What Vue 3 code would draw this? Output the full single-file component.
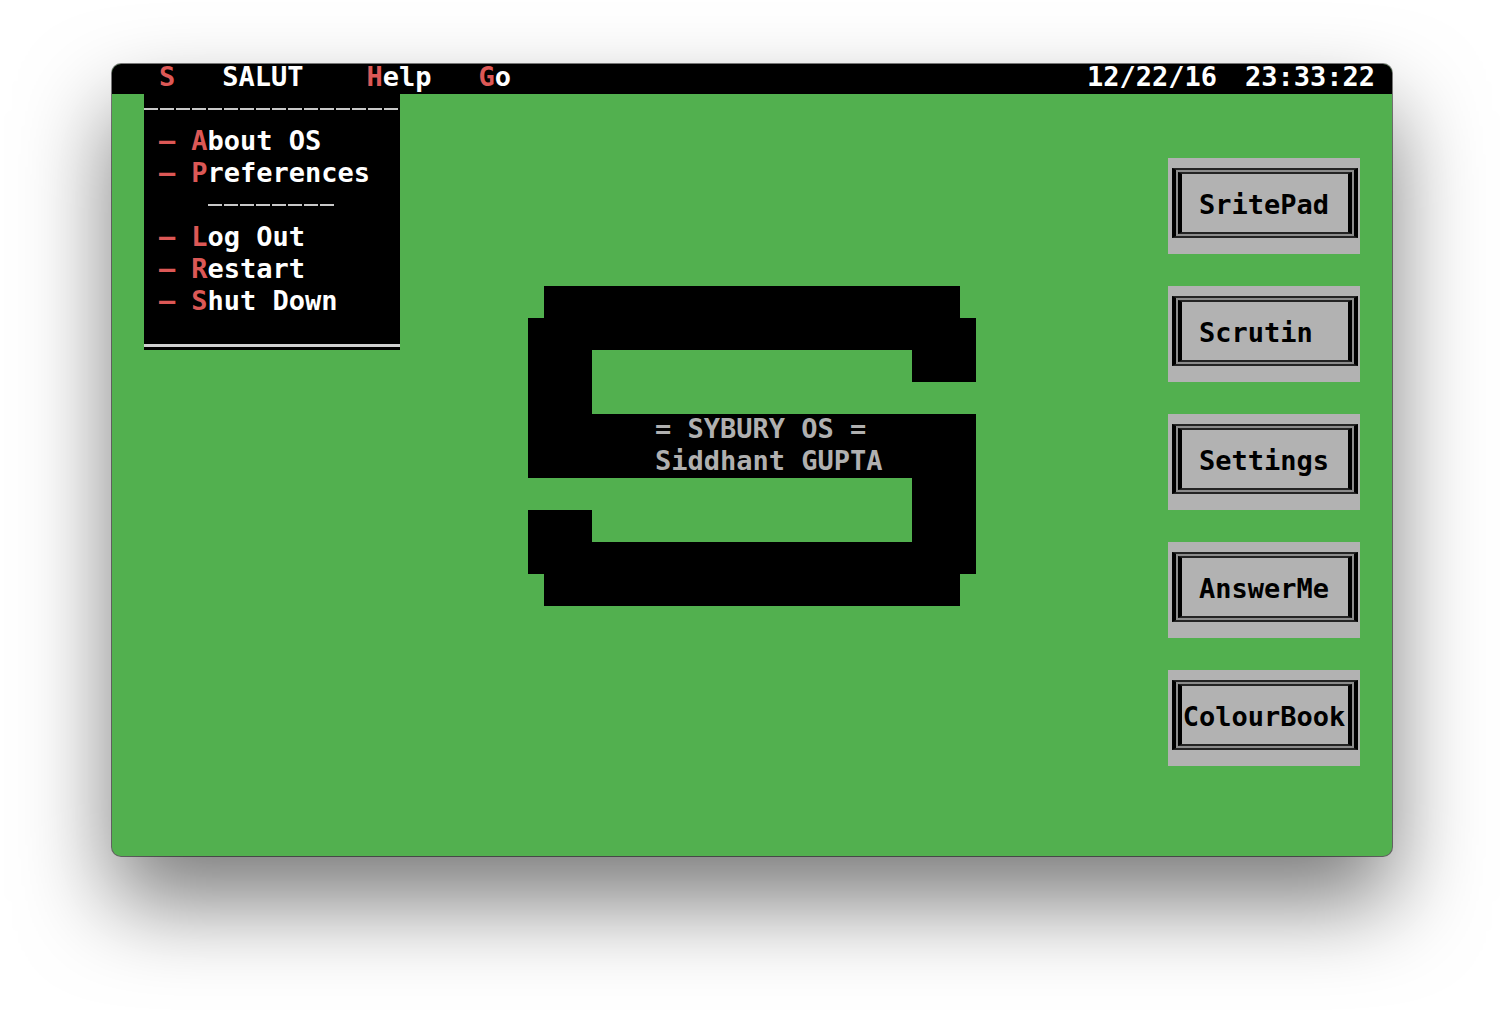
<script setup>
const session = [
  { key: 'A', rest: 'bout OS' },
  { key: 'P', rest: 'references' },
]
const power = [
  { key: 'L', rest: 'og Out' },
  { key: 'R', rest: 'estart' },
  { key: 'S', rest: 'hut Down' },
]
const apps = ['SritePad', 'Scrutin ', 'Settings', 'AnswerMe', 'ColourBook']
</script>

<template>
  <div class="page">
    <main class="window">
      <header class="bar">
        <nav class="menus">
          <button class="system" aria-label="System menu"><b>S</b></button>
          <button class="title">SALUT</button>
          <button class="help"><b>H</b>elp</button>
          <button><b>G</b>o</button>
        </nav>
        <div class="clock">
          <time>12/22/16</time>
          <time>23:33:22</time>
        </div>
      </header>

      <section class="desktop">
        <div class="dropdown">
          <hr class="dashes" />
          <button v-for="item in session" :key="item.key">
            <i>–</i><span><b>{{ item.key }}</b>{{ item.rest }}</span>
          </button>
          <hr class="dashes short" />
          <button v-for="item in power" :key="item.key">
            <i>–</i><span><b>{{ item.key }}</b>{{ item.rest }}</span>
          </button>
          <hr class="edge" />
        </div>

        <div class="logo">
          <p>= SYBURY OS =</p>
          <p>Siddhant GUPTA</p>
        </div>

        <div class="apps">
          <button v-for="app in apps" :key="app" class="app">
            <span class="frame"><span class="label">{{ app }}</span></span>
          </button>
        </div>
      </section>
    </main>
  </div>
</template>

<style>
body {
  margin: 0;
  background: #fff;
}
</style>

<style scoped>
.page {
  display: flex;
  box-sizing: border-box;
  min-height: 100vh;
  padding: 64px 112px 160px;
  font: bold 27px/32px "DejaVu Sans Mono", "Liberation Mono", monospace;
}

.window {
  flex: 1;
  display: flex;
  flex-direction: column;
  border-radius: 9px;
  background: #52b04f;
  box-shadow: 0 0 0 1px rgba(0, 0, 0, 0.5), 0 46px 90px rgba(0, 0, 0, 0.52);
}

button {
  padding: 0;
  border: 0;
  background: none;
  color: inherit;
  font: inherit;
  text-align: left;
}

b,
i {
  color: #dc5856;
  font-style: normal;
}

.bar {
  display: flex;
  justify-content: space-between;
  height: 30px;
  padding: 0 17px 0 47px;
  border-radius: 9px 9px 0 0;
  background: #000;
  color: #fff;
  line-height: 26px;
}

.menus,
.clock {
  display: flex;
  align-items: flex-start;
}

.menus {
  gap: 47px;
}

.title {
  margin-right: 16px;
}

.clock {
  gap: 28px;
}

.desktop {
  position: relative;
  flex: 1;
  display: grid;
  grid-template-columns: 1fr auto 1fr;
  align-items: start;
  padding: 64px 32px 88px;
}

.dropdown {
  position: absolute;
  top: 0;
  left: 32px;
  display: flex;
  flex-direction: column;
  width: 256px;
  background: #000;
  color: #fff;
}

.dropdown button {
  display: flex;
  gap: 16px;
  padding-left: 15px;
}

.dropdown hr {
  margin: 0;
  border: 0;
}

.dropdown .dashes {
  height: 2px;
  margin: 14px 0 15px;
  background: repeating-linear-gradient(90deg, #c8c8c8 0 14px, #000 14px 16px);
}

.dropdown .short {
  width: 128px;
  margin: 15px 0 15px 64px;
}

.dropdown .edge {
  height: 3px;
  margin: 27px 0 3px;
  background: #d0d0d0;
}

.logo {
  grid-column: 2;
  box-sizing: border-box;
  width: 448px;
  height: 320px;
  margin-top: 128px;
  padding: 127px 0 0 127px;
  background: #000;
  color: #b0b0b0;
  clip-path: polygon(
    16px 0, 432px 0, 432px 32px, 448px 32px, 448px 96px, 384px 96px,
    384px 64px, 64px 64px, 64px 128px, 448px 128px, 448px 288px, 432px 288px,
    432px 320px, 16px 320px, 16px 288px, 0 288px, 0 224px, 64px 224px,
    64px 256px, 384px 256px, 384px 192px, 0 192px, 0 32px, 16px 32px
  );
}

.logo p {
  margin: 0;
}

.apps {
  justify-self: end;
  display: flex;
  flex-direction: column;
  gap: 32px;
}

.app {
  box-sizing: border-box;
  width: 192px;
  height: 96px;
  padding: 10px 2px 16px 4px;
  background: #b2b2b2;
  color: #000;
}

.frame,
.label {
  display: block;
  border: solid;
  border-width: 2px 4px;
  border-color: #242424 #000;
}

.frame {
  padding: 2px;
  background: #8c8c8c;
}

.label {
  padding: 15px 2px 11px 0;
  background: #b2b2b2;
  text-align: center;
  white-space: pre;
}
</style>
